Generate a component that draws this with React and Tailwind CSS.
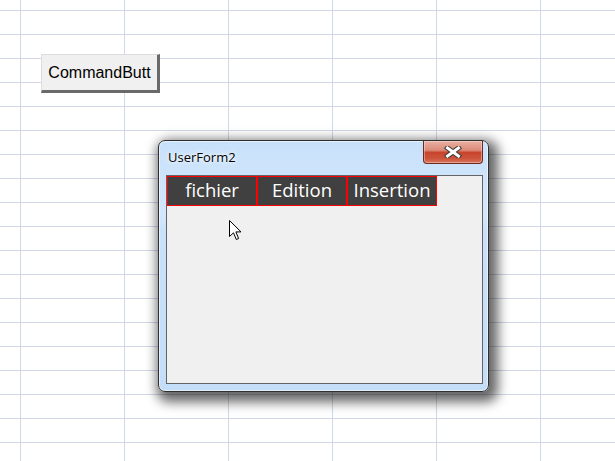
import React from 'react';

const tabs = ["fichier", "Edition", "Insertion"];

const CloseButton = () => (
    <div className="w-[60px] h-[23px] rounded-b-[4px] border border-t-0 border-[#6e2a1f] bg-[linear-gradient(to_bottom,#e9b0a3_0%,#dc8a78_42%,#c8442c_52%,#cc553c_80%,#d9765e_100%)] flex items-center justify-center shadow-[inset_0_0_0_1px_rgba(255,255,255,0.35)]">
        <svg width="18" height="12" viewBox="0 0 18 12">
            <path d="M3.5 2 L14.5 10 M14.5 2 L3.5 10" stroke="#3a3a3a" strokeWidth="5" strokeLinecap="square" />
            <path d="M3.5 2 L14.5 10 M14.5 2 L3.5 10" stroke="#ffffff" strokeWidth="3" strokeLinecap="square" />
        </svg>
    </div>
);

const Cursor = () => (
    <svg className="absolute left-[62px] top-[44px]" width="13" height="21" viewBox="0 0 13 21">
        <polygon points="0.5,0.5 0.5,16.5 4.5,12.8 7.3,19.5 9.6,18.5 6.9,11.9 12,11.9" fill="#ffffff" stroke="#000000" strokeWidth="1" strokeLinejoin="miter" />
    </svg>
);

export default function App() {
    return (
        <div className="w-[615px] h-[461px] overflow-hidden bg-white bg-[linear-gradient(to_right,#d0d7e5_1px,transparent_1px),linear-gradient(to_bottom,#d0d7e5_1px,transparent_1px)] bg-[size:104px_24px] bg-[position:20px_10px] flex flex-col items-start">
            {/* sheet button */}
            <div className="mt-[54px] ml-[41px] w-[119px] h-[39px] bg-[#f0f0f0] border-t border-l border-[#dcdcdc] border-r-[3px] border-b-[3px] border-r-[#6a6a6a] border-b-[#6a6a6a] overflow-hidden flex items-center justify-center">
                <span className="text-[16px] text-black whitespace-nowrap font-['Liberation_Sans',Arial,sans-serif]">CommandButt</span>
            </div>

            {/* UserForm window */}
            <div className="mt-[47px] ml-[158px] w-[331px] h-[252px] rounded-[7px] border border-[#2e2e2e] bg-[linear-gradient(to_bottom,#c8e1fa_0%,#d3e8fc_30%,#c9e1fa_36%,#c4def9_100%)] shadow-[inset_0_0_0_1px_rgba(255,255,255,0.55),4px_5px_12px_5px_rgba(0,0,0,0.6)] flex flex-col pl-[7px] pr-[5px] pb-[7px]">
                <div className="h-[34px] shrink-0 flex items-start justify-between">
                    <span className="ml-[2px] h-[34px] flex items-center text-[13px] text-black font-['Open_Sans',sans-serif] [text-shadow:0_0_6px_#ffffff,0_0_3px_#ffffff]">UserForm2</span>
                    <CloseButton />
                </div>
                <div className="relative flex-1 border border-[#646464] bg-[#f0f0f0]">
                    <div className="flex">
                        {tabs.map(t => (
                            <div key={t} className="w-[90px] h-[30px] border border-[#ff0000] bg-[#404040] flex items-center justify-center pb-[2px]">
                                <span className="text-[18.5px] leading-[26px] text-white font-['Open_Sans',sans-serif]">{t}</span>
                            </div>
                        ))}
                    </div>
                    <Cursor />
                </div>
            </div>
        </div>
    );
}
